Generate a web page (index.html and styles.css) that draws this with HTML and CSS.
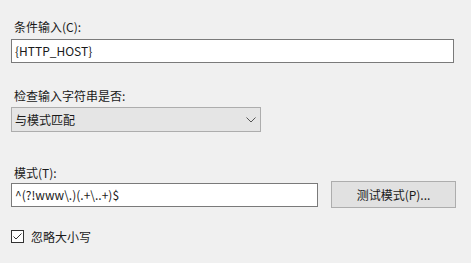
FILE: index.html
```html
<!DOCTYPE html>
<html lang="zh-CN">
<head>
  <meta charset="UTF-8">
  <title>编辑条件</title>
  <link rel="stylesheet" href="styles.css">
</head>
<body>
  <main class="dialog">
    <label class="field-label">条件输入(C):</label>
    <div class="text-box wide">{HTTP_HOST}</div>

    <label class="field-label second">检查输入字符串是否:</label>
    <div class="select-box">
      <span>与模式匹配</span>
      <svg class="chevron" width="10" height="6" viewBox="0 0 10 6">
        <path d="M0.5 0.5 L5 5 L9.5 0.5" fill="none" stroke="#555" stroke-width="1"/>
      </svg>
    </div>

    <label class="field-label third">模式(T):</label>
    <div class="pattern-row">
      <div class="text-box pattern">^(?!www\.)(.+\..+)$</div>
      <button class="test-button">测试模式(P)...</button>
    </div>

    <div class="check-row">
      <span class="check-box">
        <svg width="11" height="11" viewBox="0 0 11 11">
          <path d="M1.5 5.5 L4 8 L9.5 2.5" fill="none" stroke="#333" stroke-width="1"/>
        </svg>
      </span>
      <span>忽略大小写</span>
    </div>
  </main>
</body>
</html>
```

FILE: styles.css
```css
body {
  margin: 0;
  padding: 0;
  background-color: #f0f0f0;
  color: #1a1a1a;
  font-family: "Noto Sans CJK SC", "Noto Sans", sans-serif;
  font-size: 12px;
}
.dialog {
  padding: 19px 0 0 11px;
  width: 445px;
}
.field-label {
  display: block;
  line-height: 16px;
  height: 16px;
  margin: 0 0 4px 3px;
}
.field-label.second {
  margin-top: 25px;
  margin-bottom: 3px;
}
.field-label.third {
  margin-top: 33px;
  margin-bottom: 2px;
}
.text-box {
  box-sizing: border-box;
  height: 24px;
  line-height: 22px;
  padding: 0 3px;
  background: #fff;
  border: 1px solid #7a7a7a;
  white-space: nowrap;
}
.wide {
  width: 443px;
}
.select-box {
  box-sizing: border-box;
  width: 250px;
  height: 25px;
  padding: 0 4px 0 3px;
  display: flex;
  align-items: center;
  justify-content: space-between;
  background: #e5e5e5;
  border: 1px solid #adadad;
}
.pattern-row {
  display: flex;
  align-items: center;
  gap: 13px;
  height: 27px;
  margin-top: -2px;
}
.pattern {
  width: 307px;
}
.test-button {
  box-sizing: border-box;
  width: 125px;
  height: 27px;
  padding: 0;
  background: #e1e1e1;
  border: 1px solid #adadad;
  font-family: inherit;
  font-size: 12px;
  color: #1a1a1a;
}
.check-row {
  display: flex;
  align-items: center;
  gap: 7px;
  margin-top: 20px;
}
.check-box {
  box-sizing: border-box;
  width: 13px;
  height: 13px;
  border: 1px solid #333;
  background: #fff;
  display: flex;
  align-items: center;
  justify-content: center;
}
.check-box svg {
  display: block;
}
```
